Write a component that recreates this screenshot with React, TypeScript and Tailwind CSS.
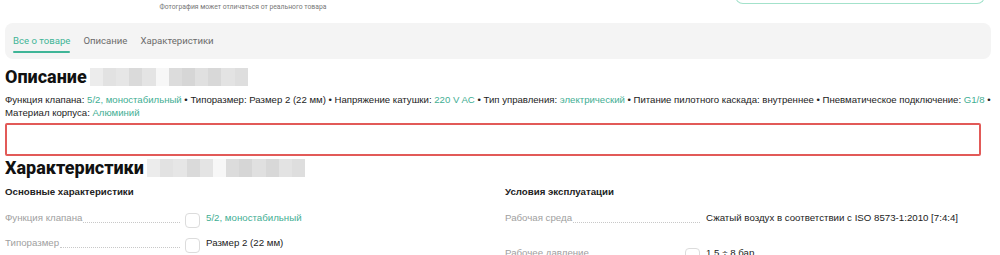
import React from "react";

const G = "text-[#3fae93]";

function Blur({ w }: { w: number }) {
  const cells = [
    "#ececec", "#e2e2e2", "#e6e6e6", "#dadada", "#e4e4e4", "#f7f7f7", "#dcdcdc", "#d6d6d6", "#e0e0e0", "#d8d8d8", "#e3e3e3", "#dedede",
  ];
  return (
    <div className="flex h-[18px] ml-[3px] self-center" style={{ width: w }}>
      {cells.map((c, i) => (
        <div key={i} className="flex-1 h-full" style={{ background: c }} />
      ))}
    </div>
  );
}

function Row({ label, value, green, box, h }: { label: string; value: string; green?: boolean; box?: boolean; h: string }) {
  return (
    <div className={`flex items-start ${h}`}>
      <div className="flex items-end w-[195px] shrink-0">
        <span className="text-[#a0a0a0] whitespace-nowrap">{label}</span>
        <span className="flex-1 border-b border-dotted border-[#c8c8c8] mb-[3px] ml-[1px]" />
        {box && <span className="w-[15px] h-[15px] border border-[#dcdcdc] rounded-[4px] ml-[5px] mb-[-2px] shrink-0" />}
      </div>
      <span className={`ml-[6px] whitespace-nowrap ${green ? G : "text-[#222]"}`}>{value}</span>
    </div>
  );
}

export default function App() {
  return (
    <div className="w-[1000px] h-[255px] overflow-hidden bg-white relative" style={{ fontFamily: "'Liberation Sans', Arial, sans-serif" }}>
      {/* top strip */}
      <div className="flex h-[23px]">
        <div className="w-[486px] text-center text-[6.8px] text-[#777] pt-[2px]" style={{ fontFamily: "Roboto, sans-serif" }}>
          Фотография может отличаться от реального товара
        </div>
        <div className="ml-[249px] w-[248px] h-[3px] -mt-[8px] border border-[#a3e2cb] rounded-b-[8px] box-content pt-[8px] border-t-0" />
      </div>
      {/* tabs */}
      <div className="ml-[5px] w-[986px] h-[36px] bg-[#f4f4f4] rounded-[8px] flex items-center pl-[8px] gap-[13px] text-[9.6px]" style={{ fontFamily: "Roboto, sans-serif" }}>
        <div className="relative h-full flex items-center text-[#3fb597]">
          Все о товаре
          <div className="absolute left-0 right-0 bottom-[6px] h-[2px] bg-[#3fb597] rounded" />
        </div>
        <div className="text-[#6b6b6b]">Описание</div>
        <div className="text-[#6b6b6b]">Характеристики</div>
      </div>
      {/* description */}
      <div className="pl-[5px] pr-[10px]">
        <div className="flex mt-[8px] h-[20px] items-center">
          <h2 className="text-[18px] font-extrabold text-[#111] leading-none" style={{ fontFamily: "Roboto, sans-serif" }}>Описание</h2>
          <Blur w={158} />
        </div>
        <p className="text-[9.6px] leading-[13px] text-[#222] mt-[6px] whitespace-nowrap">
          Функция клапана: <span className={G}>5/2, моностабильный</span> • Типоразмер: Размер 2 (22 мм) • Напряжение катушки: <span className={G}>220 V AC</span> • Тип управления: <span className={G}>электрический</span> • Питание пилотного каскада: внутреннее • Пневматическое подключение: <span className={G}>G1/8</span> •
          <br />
          Материал корпуса: <span className={G}>Алюминий</span>
        </p>
        <div className="mt-[4px] w-[976px] h-[33px] border-2 border-[#e25a58] rounded-[2px]" />
        <div className="flex mt-[2px] h-[20px] items-center">
          <h2 className="text-[18px] font-extrabold text-[#111] leading-none" style={{ fontFamily: "Roboto, sans-serif" }}>Характеристики</h2>
          <Blur w={158} />
        </div>
        <div className="grid grid-cols-[480px_480px] gap-x-[20px] mt-[7px] text-[9.7px]">
          <div>
            <div className="font-bold text-[#222] h-[26px]">Основные характеристики</div>
            <Row label="Функция клапана" value="5/2, моностабильный" green box h="h-[25px]" />
            <Row label="Типоразмер" value="Размер 2 (22 мм)" box h="h-[25px]" />
          </div>
          <div>
            <div className="font-bold text-[#222] h-[26px]">Условия эксплуатации</div>
            <Row label="Рабочая среда" value="Сжатый воздух в соответствии с ISO 8573-1:2010 [7:4:4]" h="h-[35px]" />
            <Row label="Рабочее давление" value="1,5 ÷ 8 бар" box h="h-[25px]" />
          </div>
        </div>
      </div>
    </div>
  );
}
